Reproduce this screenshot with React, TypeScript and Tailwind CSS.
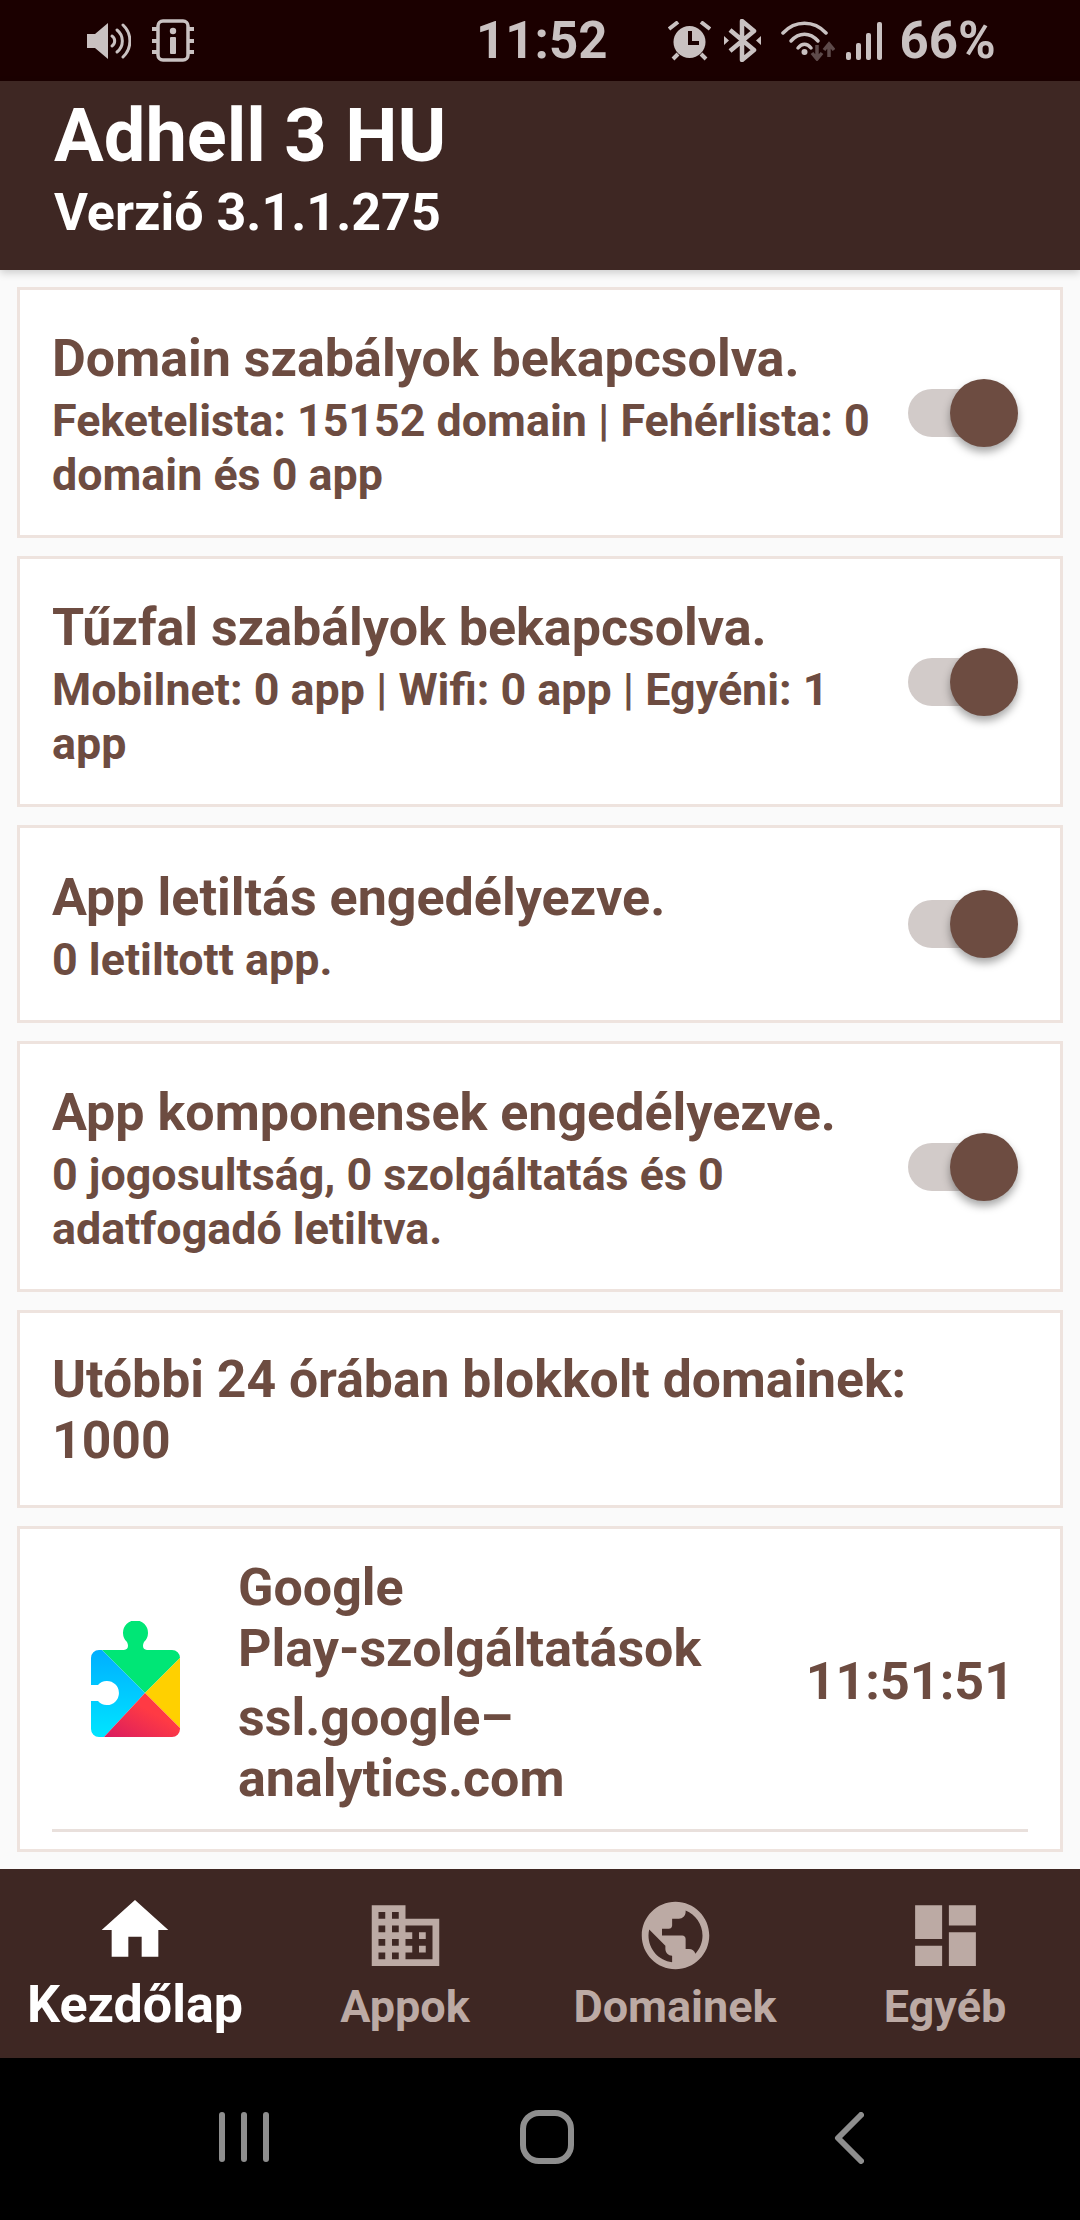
import React from "react";
import { MdHome, MdDomain, MdPublic, MdDashboard } from "react-icons/md";

const font = { fontFamily: "Roboto, sans-serif" };

function Toggle() {
  return (
    <div className="relative w-[110px] h-[68px] shrink-0 flex items-center">
      <div className="w-[98px] h-[48px] rounded-full bg-[#d2cbc9]" />
      <div className="absolute right-0 top-0 w-[68px] h-[68px] rounded-full bg-[#6d4c41] shadow-[0_5px_8px_rgba(0,0,0,0.35)]" />
    </div>
  );
}

function SwitchCard({ title, sub, height }: { title: string; sub: string; height: string }) {
  return (
    <div className={`border-[3px] border-[#eee3de] bg-white flex items-center pl-[32px] pr-[42px] ${height}`}>
      <div className="flex-1 min-w-0 pr-[10px]">
        <div className="text-[52px] leading-[71px] font-bold text-[#6d4c41] whitespace-nowrap">{title}</div>
        <div className="text-[44.8px] leading-[54px] font-bold text-[#6d4c41]">{sub}</div>
      </div>
      <Toggle />
    </div>
  );
}

function PlayIcon() {
  return (
    <svg width="89" height="116" viewBox="0 0 89 116" className="shrink-0">
      <defs>
        <clipPath id="piece">
          <path d="M8 29H33C37 29 38 25 36 21A12.5 12.5 0 1 1 53 21C51 25 52 29 56 29H81A8 8 0 0 1 89 37V108A8 8 0 0 1 81 116H8A8 8 0 0 1 0 108V80H7A12 12 0 1 0 7 64H0V37A8 8 0 0 1 8 29Z" />
        </clipPath>
        <linearGradient id="blue" x1="0" y1="0" x2="0" y2="1">
          <stop offset="0" stopColor="#00a8ff" />
          <stop offset="1" stopColor="#00e5ff" />
        </linearGradient>
        <linearGradient id="red" x1="1" y1="0" x2="0" y2="1">
          <stop offset="0.4" stopColor="#ff3a44" />
          <stop offset="1" stopColor="#d81b60" />
        </linearGradient>
      </defs>
      <g clipPath="url(#piece)">
        <polygon points="54,72 0,18 0,0 89,0 89,37" fill="#00e676" />
        <polygon points="54,72 0,18 0,116 13,116" fill="url(#blue)" />
        <polygon points="54,72 89,37 89,107" fill="#ffd000" />
        <polygon points="54,72 13,116 89,116 89,107" fill="url(#red)" />
      </g>
    </svg>
  );
}

function NavItem({ icon, label, active }: { icon: React.ReactNode; label: string; active?: boolean }) {
  return (
    <div className={`flex-1 flex flex-col items-center ${active ? "text-white pt-[20px]" : "text-[#bcaaa4] pt-[26px]"}`}>
      <div className="h-[81px] flex items-center justify-center">{icon}</div>
      <div className={`font-bold leading-[56px] ${active ? "text-[52px] mt-[7px]" : "text-[45px] mt-[3px]"}`}>{label}</div>
    </div>
  );
}

function StatusLeft() {
  return (
    <div className="flex items-center ml-[87px] gap-[21px]">
      {/* speaker */}
      <svg width="44" height="36" viewBox="0 0 44 36" fill="none" stroke="#c9c1c1" strokeWidth="3" strokeLinecap="round">
        <path d="M0 11H8L21 0V36L8 25H0Z" fill="#c9c1c1" stroke="none" />
        <path d="M25 13A6 6 0 0 1 25 23" />
        <path d="M30 7A14 14 0 0 1 30 29" />
        <path d="M36 2A22 22 0 0 1 36 34" />
      </svg>
      {/* chip with i */}
      <svg width="42" height="43" viewBox="0 0 42 43" fill="none" stroke="#c9c1c1">
        <rect x="6" y="2" width="30" height="39" rx="5" strokeWidth="3.5" />
        <path d="M0 10H5M0 22H5M0 33H5M37 10H42M37 22H42M37 33H42" strokeWidth="4" />
        <circle cx="21" cy="12" r="3.2" fill="#c9c1c1" stroke="none" />
        <rect x="18" y="18" width="6" height="17" rx="1" fill="#c9c1c1" stroke="none" />
      </svg>
    </div>
  );
}

function StatusRight() {
  return (
    <div className="flex items-center">
      {/* alarm */}
      <svg width="43" height="40" viewBox="0 0 43 40" className="mr-[13px]">
        <circle cx="21.5" cy="21" r="16" fill="#c9c1c1" />
        <path d="M20 10H24V20H31V24H20Z" fill="#1b0000" />
        <path d="M1 8L10 1M42 8L33 1M5 38L10 33M38 38L33 33" stroke="#c9c1c1" strokeWidth="4" fill="none" />
      </svg>
      {/* bluetooth */}
      <svg width="37" height="43" viewBox="0 0 37 43" fill="none" stroke="#c9c1c1" strokeWidth="4.5" className="mr-[20px]">
        <path d="M6 11L30 31L18 41V2L30 12L6 32" strokeLinejoin="round" />
        <path d="M0 17L5 21.5L0 26Z M37 17L32 21.5L37 26Z" fill="#c9c1c1" stroke="none" />
      </svg>
      {/* wifi with arrows */}
      <svg width="54" height="40" viewBox="0 0 54 40" fill="none" className="mr-[11px]">
        <path d="M2 12C14 -1 33 -1 45 12" stroke="#c9c1c1" strokeWidth="3.5" strokeLinecap="round" />
        <path d="M10 20C18 11 29 11 37 20" stroke="#c9c1c1" strokeWidth="3.5" strokeLinecap="round" />
        <path d="M17 27C21 22 26 22 30 27" stroke="#c9c1c1" strokeWidth="3.5" strokeLinecap="round" />
        <circle cx="23.5" cy="31" r="3" fill="#c9c1c1" />
        <path d="M36 24V38M31 32L36 38L41 32" stroke="#5e4a4a" strokeWidth="3.5" />
        <path d="M48 36V24M43 29L48 23L53 29" stroke="#5e4a4a" strokeWidth="3.5" />
      </svg>
      {/* signal */}
      <svg width="36" height="38" viewBox="0 0 36 38" className="mr-[17px]" fill="#c9c1c1">
        <rect x="0" y="30" width="5" height="8" rx="2" />
        <rect x="10" y="21" width="5" height="17" rx="2" />
        <rect x="20" y="11" width="5" height="27" rx="2" />
        <rect x="31" y="0" width="5" height="38" rx="2" />
      </svg>
      <span className="text-[51px] font-bold text-[#c9c1c1] leading-none">66%</span>
    </div>
  );
}

export default function App() {
  return (
    <div className="w-[1080px] h-[2220px] flex flex-col bg-[#fafafa] overflow-hidden" style={font}>
      {/* status bar */}
      <div className="h-[81px] bg-[#1b0000] flex items-center shrink-0">
        <StatusLeft />
        <span className="ml-[282px] text-[51px] font-bold leading-none text-[#c9c1c1]">11:52</span>
        <div className="ml-[61px]">
          <StatusRight />
        </div>
      </div>

      {/* toolbar */}
      <div className="h-[189px] bg-[#3e2723] shrink-0 pl-[54px] pt-[12px] text-white font-bold shadow-[0_3px_8px_rgba(0,0,0,0.18)] z-10">
        <div className="text-[74px] leading-[86px]">Adhell 3 HU</div>
        <div className="text-[52px] leading-[68px]">Verzió 3.1.1.275</div>
      </div>

      {/* cards */}
      <div className="flex-1 px-[17px] pt-[17px] flex flex-col gap-[18px]">
        <SwitchCard height="h-[251px]" title="Domain szabályok bekapcsolva." sub="Feketelista: 15152 domain | Fehérlista: 0 domain és 0 app" />
        <SwitchCard height="h-[251px]" title="Tűzfal szabályok bekapcsolva." sub="Mobilnet: 0 app | Wifi: 0 app | Egyéni: 1 app" />
        <SwitchCard height="h-[198px]" title="App letiltás engedélyezve." sub="0 letiltott app." />
        <SwitchCard height="h-[251px]" title="App komponensek engedélyezve." sub="0 jogosultság, 0 szolgáltatás és 0 adatfogadó letiltva." />

        <div className="border-[3px] border-[#eee3de] bg-white h-[198px] flex items-center pl-[32px] pr-[60px]">
          <div className="text-[51.7px] leading-[61px] pt-[2px] font-bold text-[#6d4c41]">Utóbbi 24 órában blokkolt domainek: 1000</div>
        </div>

        <div className="border-[3px] border-[#eee3de] bg-white h-[326px] px-[32px] flex flex-col">
          <div className="flex-1 flex items-center pl-[39px] pr-[14px] text-[#6d4c41] font-bold text-[52px]">
            <PlayIcon />
            <div className="ml-[58px] mr-auto pt-[8px]">
              <div className="leading-[61px]">Google<br />Play-szolgáltatások</div>
              <div className="leading-[61px] mt-[8px]">ssl.google–<br />analytics.com</div>
            </div>
            <div className="shrink-0 pt-[6px]">11:51:51</div>
          </div>
          <div className="h-[3px] bg-[#e9e0dc] mb-[17px]" />
        </div>
      </div>

      {/* bottom navigation */}
      <div className="h-[189px] bg-[#3e2723] shrink-0 flex">
        <NavItem active label="Kezdőlap" icon={<MdHome size={80} />} />
        <NavItem label="Appok" icon={<MdDomain size={81} />} />
        <NavItem label="Domainek" icon={<MdPublic size={81} />} />
        <NavItem label="Egyéb" icon={<MdDashboard size={81} />} />
      </div>

      {/* system nav */}
      <div className="h-[162px] bg-black shrink-0 relative flex items-start pt-[54px]">
        <div className="ml-[219px] flex gap-[16px] h-[50px]">
          <div className="w-[6px] h-full rounded-full bg-[#8e8e8e]" />
          <div className="w-[6px] h-full rounded-full bg-[#8e8e8e]" />
          <div className="w-[6px] h-full rounded-full bg-[#8e8e8e]" />
        </div>
        <div className="ml-[251px] -mt-[2px] w-[54px] h-[54px] rounded-[19px] border-[6px] border-[#8e8e8e]" />
        <svg width="30" height="52" viewBox="0 0 30 52" fill="none" className="ml-[260px]">
          <path d="M27 3L4 26L27 49" stroke="#8e8e8e" strokeWidth="6" strokeLinecap="round" strokeLinejoin="round" />
        </svg>
      </div>
    </div>
  );
}
